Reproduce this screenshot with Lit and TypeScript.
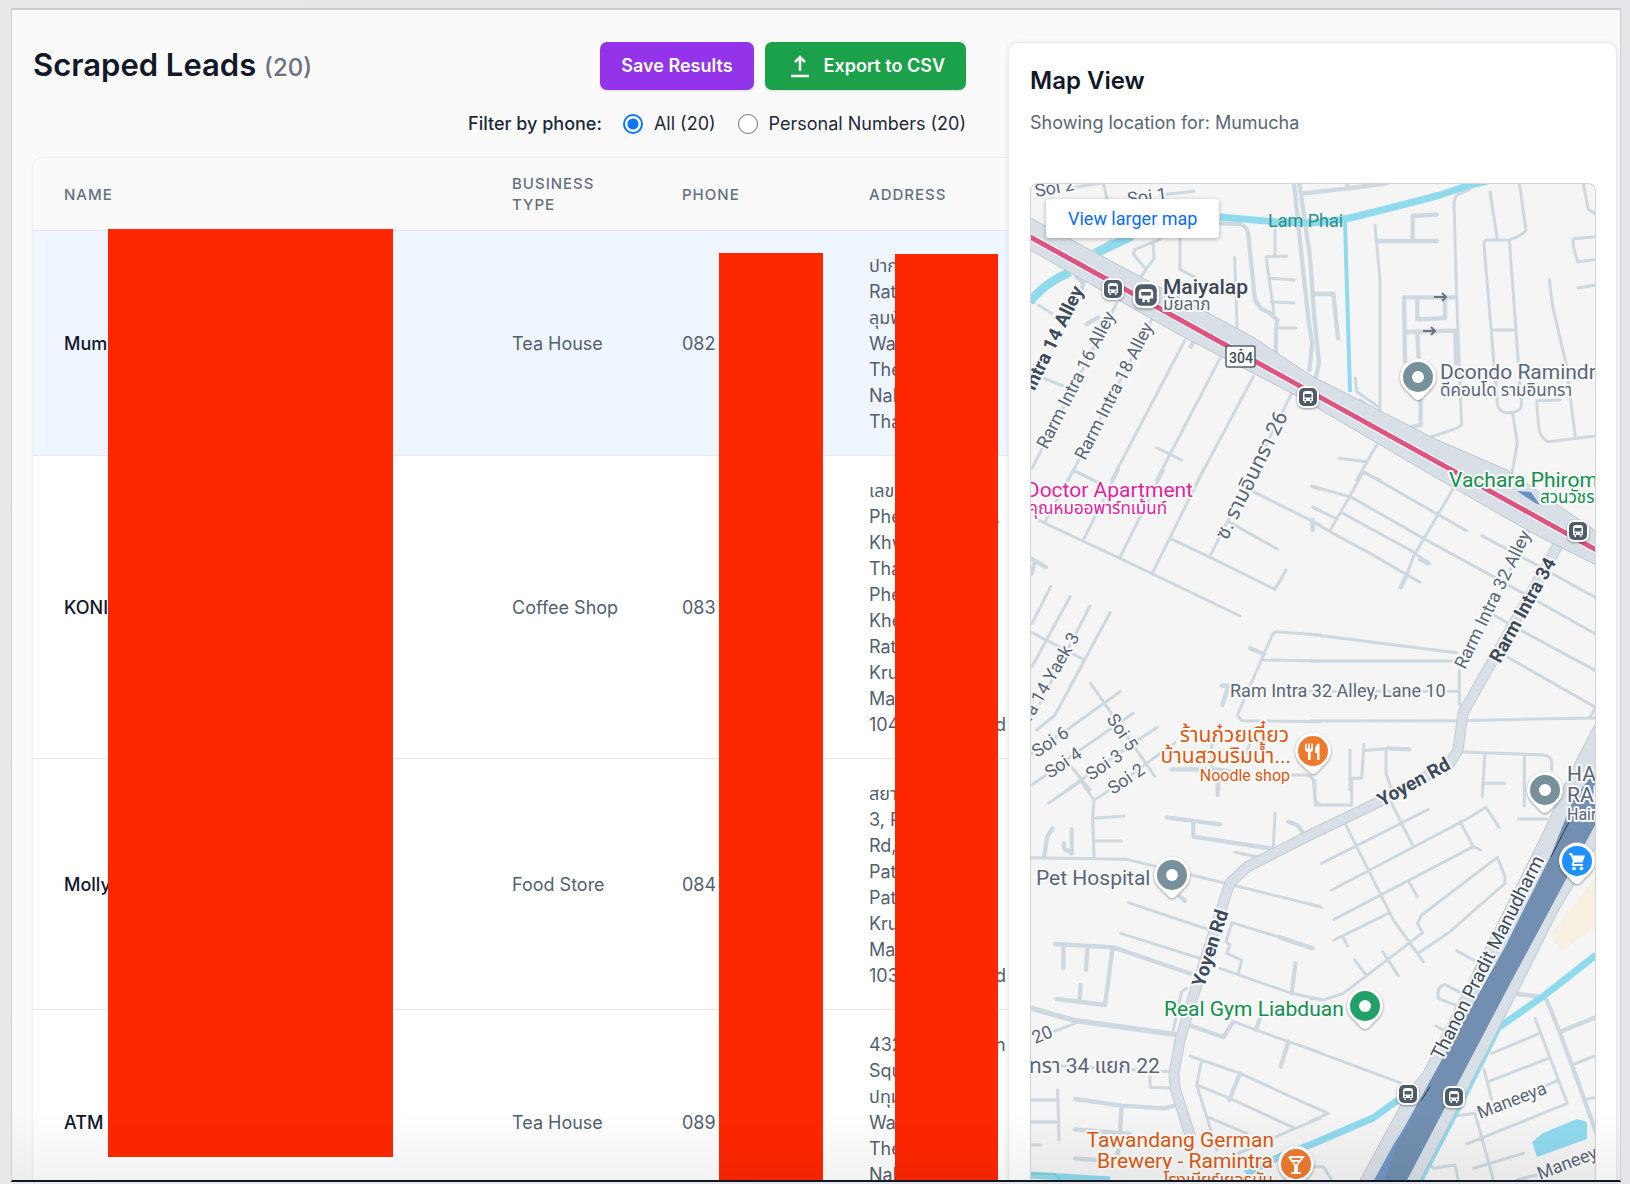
import { LitElement, html, svg, css } from "lit";
import { customElement, state } from "lit/decorators.js";

type Line = [string, string?];
interface Lead {
  name: string;
  type: string;
  phone: string;
  address: Line[];
  active?: boolean;
}

const LEADS: Lead[] = [
  {
    name: "Mum",
    type: "Tea House",
    phone: "082",
    active: true,
    address: [["ปาก"], ["Rat"], ["ลุมพิ"], ["Wa"], ["The"], ["Nak"], ["Tha"]],
  },
  {
    name: "KONI",
    type: "Coffee Shop",
    phone: "083",
    address: [["เลข"], ["Phe", ","], ["Khw"], ["Tha"], ["Phe"], ["Khe"], ["Rat"], ["Kru"], ["Ma"], ["104", "d"]],
  },
  {
    name: "Molly",
    type: "Food Store",
    phone: "084",
    address: [["สยา"], ["3, P"], ["Rd,"], ["Pat"], ["Pat"], ["Kru"], ["Ma"], ["103", "d"]],
  },
  {
    name: "ATM",
    type: "Tea House",
    phone: "089",
    address: [["432", "n"], ["Squ"], ["ปทุม"], ["Wa"], ["The"], ["Nak"], ["Tha"]],
  },
];

/* Each tile is drawn on its own grid of thirds of a unit. */
interface Tile {
  x: number;
  y: number;
  thin: string;
  wide: string;
}

const TILES: Tile[] = [
  {
    x: 1020,
    y: 180,
    thin: `M165 22L250 8M250 10L262 60M420 45L522 34M350 310L378 268L340 222L345 208L420 178M378 268L402 235L400 190
      M480 175V268L525 292M644 232L652 460M560 370L568 430M765 150V225M800 229L738 230L748 300L762 400M750 295L822 300
      M755 365L822 369M772 444L828 444M290 370L36 865M400 410L145 900M495 480L275 900M600 535L410 900M700 590L535 900
      M815 640L700 870M410 803L485 840M55 375L95 400M65 592L130 618M160 872L240 910M215 215L275 182`,
    wide: `M605 130L660 132Q682 138 685 165L705 360L722 385L748 398L772 420L768 450V520
      M822 10L845 230L868 440L877 490L868 570M838 10L870 230L882 400L897 550L888 590M518 490L512 500M200 432L235 412
      M170 290L190 310L180 345`,
  },
  {
    x: 1310,
    y: 180,
    thin: `M195 135L210 300V700M480 28L440 45L432 65L440 350L448 560L455 735L440 745L360 772M136 595L140 635L205 680
      M150 660L200 700M540 35L562 178M628 10L648 150Q640 165 598 180L530 180Q521 182 522 195L562 670Q566 700 600 698Q636 696 634 670L598 180
      M548 450H612M608 700L622 790L605 885M820 12L835 88L857 102M857 170L790 176L790 200L803 246L857 238M803 324L857 315
      M718 298L728 380L768 550L796 772M680 670L686 740Q690 775 715 785L857 768M680 662L750 660M200 795L140 900M88 835L170 845M160 878L210 900`,
    wide: `M200 183H380M308 180V108L380 104M282 352L285 545M282 352H436M322 360V418L405 414V360M290 456L436 452L438 550
      M322 460L326 540M332 660V735L300 742M10 342H70L84 475M-20 40L115 25L230 10M112 10V25`,
  },
  {
    x: 1020,
    y: 470,
    thin: `M160 0L75 155M295 0L190 210M430 0L300 262M550 0L398 308M160 0L240 40M50 148L300 265L398 312L660 438
      M450 205L570 262L765 358L798 300M640 120L568 262M625 155L772 237M700 65L870 150L900 165M880 155V180M875 50L900 58M880 112L900 122
      M92 350L36 460M150 380L36 590M210 408L60 700M270 428L105 735L50 780M36 488L190 568M212 640L405 920M300 665L140 780L36 850
      M340 730L180 840L36 945M412 772L340 820L140 960M465 818L270 960M150 885L210 960M900 495L768 485L758 492L652 735L665 752L900 755M730 570L900 573
      M575 820V895M690 820L680 850M800 915L860 915Q885 920 885 960`,
    wide: `M33 265L78 292M45 275L35 310M690 535L732 552M605 647H625L607 705M455 898H590L632 905M595 905V960`,
  },
  {
    x: 1310,
    y: 470,
    thin: `M160 5L130 60L60 182M160 5L470 183M5 48L125 82L340 205L550 320L640 370L857 492M8 112L78 145M95 128L300 240L358 280
      M0 150L60 185L180 250L330 337M430 55L310 260L290 315L272 352M515 197L680 285L857 383M550 435L640 485L857 602
      M590 560L857 712L838 745M0 493L440 548M0 573H430M0 664H448M0 753L440 752L857 744M448 600V700L458 715M660 180L600 300
      M440 845L700 855Q725 857 725 880V900M525 850L518 950M520 940H583M643 855V960M120 840V960M162 822L155 925H128
      M160 842L240 835M228 840V910L245 960`,
    wide: `M290 315L272 352M330 268L355 280M235 835L298 838M8 150V180`,
  },
  {
    x: 1020,
    y: 780,
    thin: `M180 0L222 60L218 110L222 232M180 5L85 70M222 60L270 30M220 115L312 108M225 183H305M33 233L320 238L410 260L515 285L900 380
      M765 100L760 207M645 217L710 230M880 0L885 60L900 75M325 368L570 450M302 460L540 535M165 730L100 755M635 428L780 472L878 505
      M635 430L618 485L630 495L620 520L665 540L655 580M600 565L815 640L900 658M500 625L485 635L460 750M640 725L805 785L900 817
      M510 828L545 840L660 880L900 990M545 840L530 915L560 1010L590 1110M530 915L630 955L825 1045L900 1015M560 1010L680 1060M825 1045L655 1120
      M110 857L455 875M390 890V922L450 924M33 960H110M33 1026H110M113 930L117 1080M33 1095H62`,
    wide: `M98 145L82 170L72 232M155 148V220L132 205V190M440 112L600 133M520 130V170L760 207M805 125L832 135L850 160M593 0V45
      M480 350L495 362M105 492L280 502L515 582M130 500V565M202 505L198 570M278 505L255 675L110 657M182 615L178 665M826 550L815 640
      M515 738L610 772L640 725M720 715L708 750M805 785L782 860M660 880L628 960M165 957L305 977L430 985L460 978M305 977L300 1060
      M165 1048L330 1062M165 1135L230 1140M295 1110L290 1130M780 472L878 505M33 683L165 720L475 763M33 686L165 723L475 766`,
  },
  {
    x: 1310,
    y: 780,
    thin: `M15 0V75H125V0M520 0L517 50M520 10H583M643 0V78M625 117H710M105 130L250 420L340 545M35 250L355 88
      M65 330L465 120L528 82L567 142M72 418L490 200L450 125M490 200L512 210M240 60L310 200M295 302L322 350M72 480L235 400M98 470L113 498
      M0 372L35 382M325 520L420 455L585 310V290L562 232L335 405L322 430L338 458L225 545L100 640L40 660L0 655M218 515L265 587M133 538L168 585
      M440 512L505 548L490 580M455 640L405 613Q378 620 385 655L435 675M378 738L400 750M0 808L270 908M0 975L55 1000L0 1025
      M785 855L857 827M820 960L857 952M675 715L772 970L470 1092M545 820L685 762M540 903L715 835M522 868L545 958M740 903L700 920
      M420 1010L495 1000L550 1200M490 1165L640 1120M350 1145L370 1165L435 1155L445 1200M620 1200L680 1185M0 1160L40 1160L65 1200`,
    wide: `M625 642L705 652Q730 700 820 950L857 1055M750 755L857 712`,
  },
];

interface Label {
  t: string;
  x: number;
  y: number;
  k: string;
  r?: number;
  end?: boolean;
}

const LABELS: Label[] = [
  { t: "Soi 2", x: 1036, y: 197, r: -10, k: "street" },
  { t: "Soi 1", x: 1128, y: 205, r: -7, k: "street" },
  { t: "Lam Phai", x: 1268, y: 227, k: "water" },
  { t: "Maiyalap", x: 1163, y: 294, k: "station" },
  { t: "มัยลาภ", x: 1163, y: 310, k: "thai" },
  { t: "Dcondo Ramindr", x: 1440, y: 379, k: "place" },
  { t: "ดีคอนโด รามอินทรา", x: 1440, y: 396, k: "thai" },
  { t: "Intra 14 Alley", x: 1084, y: 290, r: -64, k: "road", end: true },
  { t: "Rarm Intra 16 Alley", x: 1047, y: 450, r: -63, k: "street" },
  { t: "Rarm Intra 18 Alley", x: 1085, y: 461, r: -63, k: "street" },
  { t: "ซ. รามอินทรา 26", x: 1227, y: 541, r: -64, k: "street-thai" },
  { t: "Doctor Apartment", x: 1193, y: 497, k: "place pink", end: true },
  { t: "คุณหมออพาร์ทเม้นท์", x: 1167, y: 514, k: "thai pink", end: true },
  { t: "Vachara Phirom", x: 1449, y: 487, k: "place green" },
  { t: "สวนวัชร", x: 1540, y: 503, k: "thai green" },
  { t: "Rarm Intra 32 Alley", x: 1465, y: 670, r: -64, k: "street" },
  { t: "Rarm Intra 34", x: 1500, y: 664, r: -61, k: "road" },
  { t: "Ram Intra 32 Alley, Lane 10", x: 1230, y: 697, k: "street" },
  { t: "ra 14 Yaek 3", x: 1080, y: 637, r: -60, k: "street", end: true },
  { t: "Soi 6", x: 1037, y: 758, r: -34, k: "street" },
  { t: "Soi 4", x: 1050, y: 779, r: -34, k: "street" },
  { t: "Soi 3", x: 1091, y: 781, r: -34, k: "street" },
  { t: "Soi 2", x: 1113, y: 795, r: -34, k: "street" },
  { t: "Soi 5", x: 1106, y: 719, r: 56, k: "street" },
  { t: "ร้านก๋วยเตี๋ยว", x: 1289, y: 742, k: "thai-large orange", end: true },
  { t: "บ้านสวนริมน้ำ...", x: 1291, y: 763, k: "thai-large orange", end: true },
  { t: "Noodle shop", x: 1290, y: 781, k: "small orange", end: true },
  { t: "Pet Hospital", x: 1036, y: 885, k: "place" },
  { t: "Yoyen Rd", x: 1382, y: 807, r: -29, k: "road" },
  { t: "Yoyen Rd", x: 1204, y: 988, r: -72, k: "road" },
  { t: "Real Gym Liabduan", x: 1164, y: 1016, k: "place green" },
  { t: "20", x: 1035, y: 1044, r: -22, k: "street" },
  { t: "ทรา 34 แยก 22", x: 1029, y: 1073, k: "street-thai" },
  { t: "Tawandang German", x: 1274, y: 1147, k: "place orange", end: true },
  { t: "Brewery - Ramintra", x: 1273, y: 1168, k: "place orange", end: true },
  { t: "โรงเบียร์เยอรมัน", x: 1273, y: 1186, k: "thai orange", end: true },
  { t: "HAIR", x: 1567, y: 781, k: "place" },
  { t: "RAMA", x: 1567, y: 802, k: "place" },
  { t: "Hair", x: 1567, y: 820, k: "small" },
  { t: "Thanon Pradit Manudharm", x: 1442, y: 1061, r: -63, k: "road-plain" },
  { t: "Maneeya", x: 1480, y: 1119, r: -21, k: "street" },
  { t: "Maneeya", x: 1540, y: 1180, r: -21, k: "street" },
];

const dot = svg`<circle r="6" fill="#fff"></circle>`;
const fork = svg`<path fill="#fff" d="M-8 -7.500h1.600v5h1.500v-5h1.600v5h1.500v-5H0v6q0 2-2.400 2.800V9h-2.600V1.300Q-8 .5-8-1.500zM2 0Q2-7 6.500-7.800V9H4V2H2z"></path>`;
const glass = svg`<path fill="none" stroke="#fff" stroke-width="2" d="M-7 -7H7L1 1V8M-7 -7L-1 1V8M-5 9H5M-5 -3H5"></path>`;
const cart = svg`<path fill="#fff" d="M-8-8h3l1 2.500H8L5.500 1.500H-2.500L-3.300 3H6v2h-9.500Q-6 5-5 2.500L-4-.2-6.500-6H-8z"></path><circle cx="-3" cy="7.500" r="1.800" fill="#fff"></circle><circle cx="4.500" cy="7.500" r="1.800" fill="#fff"></circle>`;

const PINS = [
  { x: 1418, y: 377, c: "#78909c", g: dot },
  { x: 1172, y: 875, c: "#78909c", g: dot },
  { x: 1545, y: 790, c: "#78909c", g: dot },
  { x: 1365, y: 1006, c: "#22a069", g: dot },
  { x: 1313, y: 751, c: "#ef7a2d", g: fork },
  { x: 1296, y: 1164, c: "#ef7a2d", g: glass },
  { x: 1577, y: 861, c: "#1e90ff", g: cart },
];

const bus = svg`<path fill="#fff" fill-rule="evenodd" d="M-5-3q0-3 3-3h4q3 0 3 3v7h-1.500v2H2V4h-4v2h-1.500V4H-5zM-3.500-3v3.500h7V-3zM-3.500 1.800v1.400h1.500V1.800zM2 1.800v1.400h1.500V1.800z"></path>`;
const train = svg`<path fill="#fff" fill-rule="evenodd" d="M-6-2q0-3 3-3h6q3 0 3 3v5H3v3H1V4h-2v2h-2V3h-3zM-4-2.500v3h8v-3z"></path>`;

const STOPS = [
  { x: 1113, y: 289, s: 1, g: bus },
  { x: 1146, y: 295, s: 1.2, g: train },
  { x: 1308, y: 397, s: 1, g: bus },
  { x: 1578, y: 531, s: 1, g: bus },
  { x: 1408, y: 1094, s: 1, g: bus },
  { x: 1454, y: 1097, s: 1, g: bus },
];

@customElement("area-map")
export class AreaMap extends LitElement {
  static styles = css`
    :host {
      display: block;
      position: relative;
      overflow: hidden;
      background: #f5f5f5;
      border: 1px solid #d1d5db;
      border-bottom: 0;
      border-radius: 8px 8px 0 0;
      font-family: Roboto, "Noto Sans Thai", "Noto Sans", sans-serif;
    }
    .canvas {
      position: absolute;
      inset: 0;
      width: 100%;
      height: 100%;
    }
    .link {
      position: absolute;
      left: 15px;
      top: 15px;
      padding: 0 22px;
      height: 39px;
      line-height: 39px;
      font-size: 18px;
      color: #0b6cf0;
      background: #fff;
      border-radius: 3px;
      box-shadow: 0 1px 4px rgba(0, 0, 0, 0.3);
      text-decoration: none;
      white-space: nowrap;
    }
    .lines {
      fill: none;
      stroke-linecap: round;
      stroke-linejoin: round;
    }
    .thin {
      stroke: #ced8e0;
      stroke-width: 9;
    }
    .wide {
      stroke: #ced8e0;
      stroke-width: 13;
    }
    .river {
      stroke: #90daee;
      stroke-linecap: butt;
    }
    text {
      paint-order: stroke;
      stroke: #f8f9fa;
      stroke-width: 4px;
      stroke-linejoin: round;
      fill: #5a6676;
    }
    .street {
      font-size: 18px;
    }
    .street-thai {
      font-size: 21px;
    }
    .road {
      font-size: 19px;
      font-weight: 700;
      fill: #3c4a5a;
    }
    .road-plain {
      font-size: 19px;
      fill: #3c4a5a;
    }
    .place {
      font-size: 21px;
    }
    .station {
      font-size: 21px;
      font-weight: 500;
      fill: #3c4856;
    }
    .small {
      font-size: 16px;
    }
    .thai {
      font-size: 17px;
    }
    .thai-large {
      font-size: 21px;
    }
    .water {
      font-size: 18px;
      fill: #2b8f86;
      stroke: none;
    }
    .pink {
      fill: #e0259f;
    }
    .green {
      fill: #11904c;
    }
    .orange {
      fill: #db5a0e;
    }
    .shield {
      font-size: 14px;
      font-weight: 500;
      fill: #3c4a5a;
      stroke: none;
    }
    .pin {
      filter: drop-shadow(0 1px 1px rgba(0, 0, 0, 0.4));
    }
  `;

  render() {
    return html`
      <svg class="canvas" viewBox="1031 184 564 996" preserveAspectRatio="xMinYMin slice" role="img" aria-label="Map">
        <path fill="#f7efdf" d="M1596 877L1550 935L1561 951L1596 927Z"></path>
        <g class="lines">
          ${TILES.map(
            (t) => svg`<g transform="translate(${t.x} ${t.y}) scale(0.33333)">
              <path class="thin" d=${t.thin}></path><path class="wide" d=${t.wide}></path></g>`
          )}
        </g>
        <g class="lines river">
          <path stroke-width="9" d="M1030 302Q1043 284 1070 272M1096 253L1132 236"></path>
          <path stroke-width="7" d="M1220 217L1277 222L1310 223Q1330 222 1350 218Q1403 205 1440 195L1470 185L1487 181"></path>
          <path stroke-width="4" d="M1345 222L1350 392"></path>
          <path stroke-width="7" d="M1596 955L1545 995L1498 1028L1467 1090L1420 1180M1398 1100L1373 1118L1310 1145Q1272 1158 1246 1174M1031 1175L1110 1180"></path>
        </g>
        <path fill="#90daee" d="M1532 1142L1543 1133L1577 1119L1587 1122V1139L1537 1157Z"></path>
        <path fill="none" stroke="#7cc4ae" d="M1031 1174H1055L1060 1180"></path>
        <g class="lines">
          <path stroke="#c3cbd4" stroke-width="11" d="M1561 540L1463 713L1458 750L1450 763L1387 798L1310 835L1247 867L1230 883L1220 913L1193 997L1180 1040L1174 1073L1175 1088L1190 1135"></path>
          <path stroke="#d8dfe7" stroke-width="9" d="M1561 540L1463 713L1458 750L1450 763L1387 798L1310 835L1247 867L1230 883L1220 913L1193 997L1180 1040L1174 1073L1175 1088L1190 1135"></path>
        </g>
        <path fill="#d8dfe7" stroke="#bcc5ce" d="M1025 215L1253 337L1310 375L1435 439L1507 470L1600 534V567L1550 542L1527 530L1423 470L1297 396L1180 335L1025 247Z"></path>
        <path fill="#d8dfe7" stroke="#bcc5ce" d="M1600 715L1573 767L1543 833L1423 1073L1410 1088L1358 1184H1418L1462 1100L1517 993L1557 913L1600 840Z"></path>
        <path fill="#728fb1" d="M1600 765L1573 800L1551 855L1505 947L1440 1063L1373 1184H1405L1512 980L1600 816Z"></path>
        <path fill="#7196c6" d="M1395 1142L1425 1097L1437 1080L1398 1142L1384 1180H1374Z"></path>
        <path fill="none" stroke="#333f4d" d="M1551 857L1569 822M1421 1101L1430 1087"></path>
        <path fill="#6a8fc1" d="M1517 491L1531 492L1540 505L1535 503Z"></path>
        <path fill="none" stroke="#fff" stroke-width="7" d="M1025 234L1600 552"></path>
        <path fill="none" stroke="#de5480" stroke-width="5" d="M1025 234L1600 552"></path>
        <path fill="none" stroke="#6b7280" stroke-width="2" d="M1434 297H1446M1442 293L1446 297L1442 301M1423 331H1435M1431 327L1435 331L1431 335"></path>
        <rect x="1226" y="346" width="29" height="21" rx="2" fill="#fff" stroke="#566270" stroke-width="1.500"></rect>
        <path fill="#3c4a5a" d="M1239 349H1243L1241 351Z"></path>
        <text class="shield" x="1241" y="363" text-anchor="middle">304</text>
        ${LABELS.map(
          (l) => svg`<text class=${l.k} text-anchor=${l.end ? "end" : "start"}
            transform="translate(${l.x} ${l.y}) rotate(${l.r ?? 0})">${l.t}</text>`
        )}
        ${STOPS.map(
          (p) => svg`<g class="pin" transform="translate(${p.x} ${p.y}) scale(${p.s})">
            <rect x="-11" y="-11" width="22" height="22" rx="7" fill="#fff"></rect>
            <rect x="-9" y="-9" width="18" height="18" rx="5" fill="#4e5b69"></rect>${p.g}
          </g>`
        )}
        ${PINS.map(
          (p) => svg`<g transform="translate(${p.x} ${p.y})">
            <path class="pin" fill="#fff" d="M0 23Q-3 23-6 19L-13 12A18 18 0 1 1 13 12L6 19Q3 23 0 23Z"></path>
            <circle r="15" fill=${p.c}></circle>${p.g}</g>`
        )}
      </svg>
      <a class="link" href="#map">View larger map</a>
    `;
  }
}

@customElement("app-root")
export class AppRoot extends LitElement {
  @state() private filter = "all";

  static styles = css`
    :host {
      display: flex;
      box-sizing: border-box;
      height: 100vh;
      padding: 8px 9px 2px 11px;
      background: linear-gradient(90deg, #e8e8e8, #e4e5e8);
      font-family: Inter, "Noto Sans Thai", "Noto Sans", sans-serif;
      font-size: 18px;
      line-height: 26px;
      color: #1e293b;
    }
    .panel {
      flex: 1;
      min-width: 0;
      position: relative;
      overflow: hidden;
      display: grid;
      grid-template-columns: minmax(0, 933fr) minmax(0, 609fr);
      grid-template-rows: minmax(0, 1fr);
      gap: 42px;
      padding: 32px 3px 0 21px;
      background: #fafafa;
      border: 1px solid #cfcfcf;
      border-top-width: 2px;
      border-bottom: 2px solid #111827;
    }
    .fade {
      position: absolute;
      inset: auto 0 0 0;
      height: 72px;
      background: linear-gradient(rgba(0, 0, 10, 0), rgba(0, 0, 10, 0.05));
      pointer-events: none;
      z-index: 2;
    }
    .bar {
      display: flex;
      align-items: center;
      justify-content: space-between;
      height: 48px;
    }
    h1 {
      margin: 0;
      font-size: 31px;
      line-height: 42px;
      font-weight: 600;
      color: #111827;
    }
    .count {
      font-size: 24px;
      font-weight: 500;
      color: #6b7280;
    }
    .actions {
      display: flex;
      gap: 11px;
    }
    .button {
      display: flex;
      align-items: center;
      gap: 11px;
      height: 48px;
      padding: 0 21px;
      border: 0;
      border-radius: 7px;
      font: inherit;
      font-weight: 600;
      color: #fff;
      box-shadow: 0 1px 2px rgba(0, 0, 0, 0.12);
    }
    .save {
      background: #9333ea;
    }
    .export {
      background: #1ca14b;
    }
    .filters {
      display: flex;
      justify-content: flex-end;
      align-items: center;
      margin: 21px 0;
    }
    .caption {
      font-weight: 500;
      margin-right: 21px;
    }
    .choice {
      display: flex;
      align-items: center;
      gap: 11px;
    }
    .choice + .choice {
      margin-left: 22px;
    }
    .radio {
      appearance: none;
      margin: 0;
      width: 20px;
      height: 20px;
      border: 1px solid #6b7280;
      border-radius: 50%;
      background: #fff;
    }
    .radio:checked {
      border: 2px solid #0d76f5;
      background: radial-gradient(circle, #0d76f5 5px, #fff 6px);
    }
    .sheet {
      position: relative;
    }
    .leads {
      width: calc(100% + 80px);
      table-layout: fixed;
      border-collapse: separate;
      border-spacing: 0;
      background: #fff;
      border-radius: 10px 0 0 0;
      box-shadow: 0 0 2px rgba(0, 0, 0, 0.16);
    }
    .col-name {
      width: 448px;
    }
    .col-type {
      width: 170px;
    }
    .col-phone {
      width: 187px;
    }
    th {
      height: 72px;
      padding: 0 31px;
      text-align: left;
      font-size: 15px;
      line-height: 21px;
      font-weight: 500;
      letter-spacing: 1px;
      text-transform: uppercase;
      color: #64707f;
      background: #fafafa;
      border-bottom: 1px solid #e5e7eb;
    }
    th:first-child {
      border-radius: 10px 0 0 0;
    }
    td {
      padding: 22px 31px 20px;
      color: #535f6e;
      border-bottom: 1px solid #e5e7eb;
    }
    .active td {
      background: #eff6ff;
    }
    .name {
      font-weight: 500;
      color: #0f172a;
    }
    .line {
      display: flex;
      justify-content: space-between;
      width: 137px;
      height: 26px;
    }
    .tail {
      width: 11px;
    }
    .mask {
      position: absolute;
      background: #ff2700;
    }
    .mask-name {
      left: 75px;
      top: 71px;
      width: 285px;
      height: 928px;
    }
    .mask-phone {
      left: 686px;
      top: 95px;
      width: 104px;
      bottom: 0;
    }
    .mask-address {
      left: 862px;
      top: 96px;
      width: 103px;
      bottom: 0;
    }
    .card {
      position: relative;
      z-index: 1;
      display: flex;
      flex-direction: column;
      padding: 21px 20px 0 21px;
      background: #fff;
      border: 1px solid #e8eaed;
      border-bottom: 0;
      border-radius: 10px 10px 0 0;
      box-shadow: 0 1px 5px rgba(0, 0, 0, 0.1);
    }
    h2 {
      margin: 0;
      font-size: 24px;
      line-height: 34px;
      font-weight: 600;
      color: #111827;
    }
    .sub {
      margin: 12px 0 47px;
      color: #5b6675;
    }
    .map {
      flex: 1;
    }
  `;

  private radio(value: string, label: string) {
    return html`<label class="choice">
      <input class="radio" type="radio" name="phone" .checked=${this.filter === value}
        @change=${() => (this.filter = value)} />${label}</label>`;
  }

  render() {
    return html`
      <div class="panel">
        <main>
          <div class="bar">
            <h1>Scraped Leads <span class="count">(20)</span></h1>
            <div class="actions">
              <button class="button save">Save Results</button>
              <button class="button export">
                <svg width="27" height="26" viewBox="0 0 27 26" fill="none" stroke="#fff" stroke-width="2.500" aria-hidden="true">
                  <path d="M14 18V4M9 9L14 4L19 9M5 23H23"></path>
                </svg>
                Export to CSV
              </button>
            </div>
          </div>
          <div class="filters" role="radiogroup" aria-labelledby="by">
            <span class="caption" id="by">Filter by phone:</span>
            ${this.radio("all", "All (20)")} ${this.radio("personal", "Personal Numbers (20)")}
          </div>
          <div class="sheet">
            <table class="leads">
              <colgroup>
                <col class="col-name" />
                <col class="col-type" />
                <col class="col-phone" />
                <col />
              </colgroup>
              <thead>
                <tr>
                  <th>Name</th>
                  <th>Business Type</th>
                  <th>Phone</th>
                  <th>Address</th>
                </tr>
              </thead>
              <tbody>
                ${LEADS.map(
                  (l) => html`<tr class=${l.active ? "active" : ""}>
                    <td class="name">${l.name}</td>
                    <td>${l.type}</td>
                    <td>${l.phone}</td>
                    <td>
                      ${l.address.map(
                        ([a, b]) => html`<div class="line"><span>${a}</span>${b ? html`<span class="tail">${b}</span>` : ""}</div>`
                      )}
                    </td>
                  </tr>`
                )}
              </tbody>
            </table>
            <div class="mask mask-name"></div>
            <div class="mask mask-phone"></div>
            <div class="mask mask-address"></div>
          </div>
        </main>
        <aside class="card">
          <h2>Map View</h2>
          <p class="sub">Showing location for: Mumucha</p>
          <area-map class="map"></area-map>
        </aside>
        <div class="fade"></div>
      </div>
    `;
  }
}
